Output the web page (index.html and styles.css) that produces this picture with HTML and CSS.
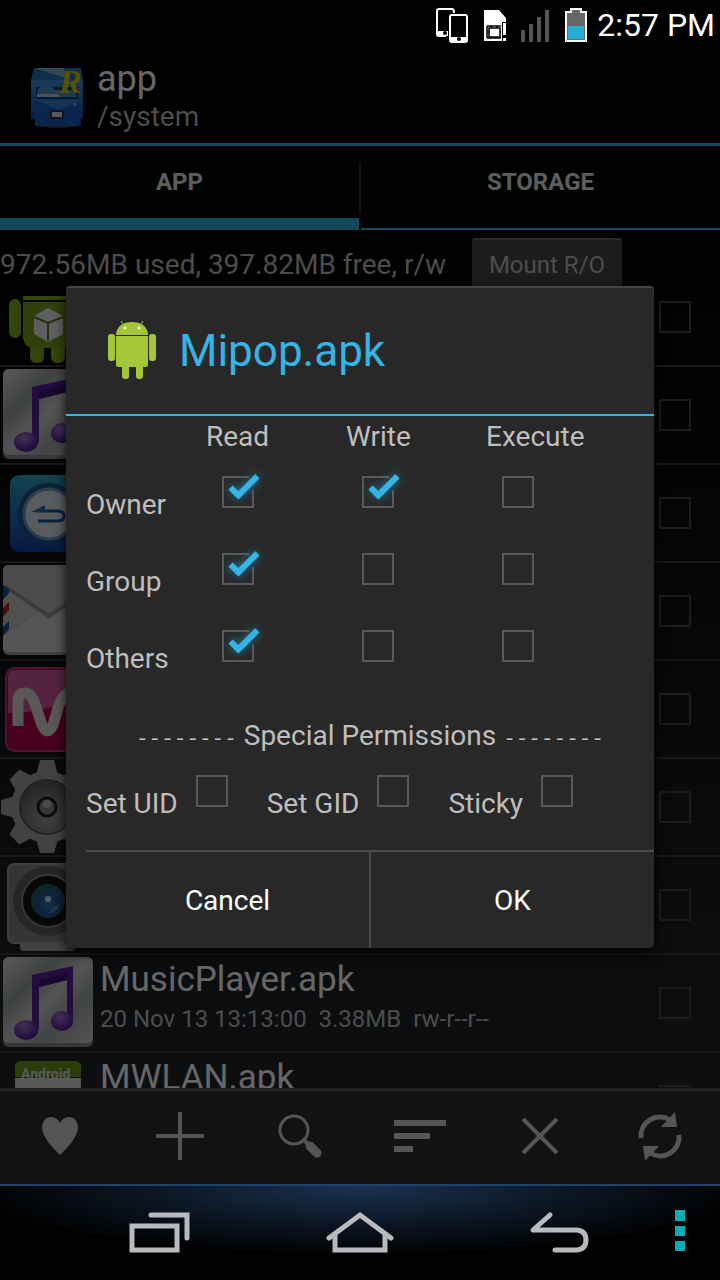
FILE: index.html
```html
<!DOCTYPE html>
<html lang="en">
<head>
    <meta charset="UTF-8">
    <meta name="viewport" content="width=device-width, initial-scale=1.0">
    <title>Mipop.apk permissions</title>
    <link rel="stylesheet" href="styles.css">
</head>
<body>
    <div class="status-bar">
        <svg width="34" height="36" viewBox="0 0 34 36">
            <path d="M17 2H4Q2 2 2 4V27Q2 29 4 29H11" fill="none" stroke="#fff" stroke-width="2"/>
            <path d="M17 2Q19 2 19 6" fill="none" stroke="#fff" stroke-width="2"/>
            <path d="M2 24H13V29H4Q2 29 2 27Z" fill="#fff"/>
            <circle cx="10" cy="26" r="2" fill="#000"/>
            <rect x="15" y="8" width="17" height="27" rx="2" fill="#000" stroke="#fff" stroke-width="2"/>
            <rect x="15" y="30" width="17" height="5" fill="#fff"/>
            <circle cx="24" cy="32" r="2" fill="#000"/>
        </svg>
        <svg width="24" height="34" viewBox="0 0 24 34">
            <path d="M1 2H16L23 10V14H19V33H1Z" fill="#fff"/>
            <path d="M20 15H23V27H20ZM20 30H23V33H20Z" fill="#fff"/>
            <path d="M4 18H18M4 30H18M4 18V30M8 18V30M14 18V30M4 24H18" stroke="#000" stroke-width="1.5" fill="none"/>
            <rect x="6" y="20" width="11" height="9" fill="#fff" stroke="#000" stroke-width="1.5"/>
        </svg>
        <svg width="29" height="34" viewBox="0 0 29 34" fill="#5a5555">
            <path d="M0 22H4V34H0ZM8 16H12V34H8ZM16 9H20V34H16ZM24 2H28V34H24Z"/>
        </svg>
        <svg width="24" height="36" viewBox="0 0 24 36">
            <path d="M6 1H18V4H23V35H1V4H6Z" fill="#fff"/>
            <path d="M8 3H16V6H21V33H3V6H8Z" fill="#666568"/>
            <rect x="4" y="19" width="16" height="13" fill="#27abd3"/>
        </svg>
        <span class="clock">2:57 PM</span>
    </div>

    <header class="action-bar">
        <svg class="app-icon" width="56" height="64" viewBox="0 0 56 64">
            <defs>
                <linearGradient id="cabinet" x1="0" y1="0" x2="0" y2="1">
                    <stop offset="0" stop-color="#49a4e2"/>
                    <stop offset="1" stop-color="#0d45b0"/>
                </linearGradient>
            </defs>
            <ellipse cx="29" cy="60" rx="20" ry="3" fill="#3b3b50"/>
            <path d="M5 3H52L54 16V54H52V61H6V54H2V16Z" fill="url(#cabinet)"/>
            <path d="M5 3H52L54 15H2Z" fill="#2476bd"/>
            <path d="M5 3H34L40 14Z" fill="#81b8d4"/>
            <path d="M6 35H50V61H6Z" fill="#1b5ec4"/>
            <path d="M6 35H50L30 45Z" fill="#3886d6"/>
            <path d="M7 22H49V34H7Z" fill="#124078"/>
            <path d="M9 24L14 21H22L26 25H45L48 32H8Z" fill="#4f94cf"/>
            <path d="M8 29H30V32H8Z" fill="#c3c7de"/>
            <rect x="22" y="46" width="12" height="7" rx="1" fill="#ddd" stroke="#342b55" stroke-width="2"/>
            <circle cx="46" cy="39" r="2" fill="#8a93b8"/>
            <text x="30" y="28" class="app-letter">R</text>
        </svg>
        <div>
            <h1 class="title">app</h1>
            <p class="path">/system</p>
        </div>
    </header>

    <nav class="tabs">
        <button class="tab active">APP</button>
        <button class="tab">STORAGE</button>
    </nav>

    <div class="volume">
        <span>972.56MB used, 397.82MB free, r/w</span>
        <button class="mount">Mount R/O</button>
    </div>

    <ul class="files">
        <li class="file">
            <svg width="96" height="96" viewBox="0 0 96 96">
                <g fill="#81ac1d">
                    <path d="M23 31V27Q25 4 48 4Q71 4 73 27V31Z"/>
                    <rect x="9" y="30" width="12" height="39" rx="6"/>
                    <rect x="75" y="30" width="12" height="39" rx="6"/>
                    <rect x="30" y="68" width="14" height="26" rx="6"/>
                    <rect x="51" y="68" width="14" height="26" rx="6"/>
                </g>
                <path d="M23 33H73V67Q73 79 61 79H35Q23 79 23 67Z" fill="#75a01c"/>
                <path d="M48 39L63 47V65L48 73L34 65V47Z" fill="#eee"/>
                <path d="M34 48L48 54L63 48M48 54V72" stroke="#577a16" stroke-width="2" fill="none"/>
            </svg>
            <input type="checkbox" class="check" aria-label="Select file 1">
        </li>
        <li class="file">
            <svg width="96" height="96" viewBox="0 0 96 96">
                <defs>
                    <linearGradient id="steel" x1="0" y1="0" x2="1" y2="1">
                        <stop offset="0" stop-color="#e0e0e0"/>
                        <stop offset="0.3" stop-color="#9ca3a5"/>
                        <stop offset="0.5" stop-color="#d0d0d0"/>
                        <stop offset="0.7" stop-color="#a2abac"/>
                        <stop offset="1" stop-color="#d8d0d4"/>
                    </linearGradient>
                    <radialGradient id="ball" cx="0.4" cy="0.3" r="0.7">
                        <stop offset="0" stop-color="#a679d0"/>
                        <stop offset="1" stop-color="#4a1693"/>
                    </radialGradient>
                    <g id="music">
                        <rect x="3" y="2" width="90" height="90" rx="6" fill="#8a8a8a"/>
                        <rect x="3" y="2" width="90" height="86" rx="6" fill="url(#steel)"/>
                        <path d="M32 20L73 11V66H67V25L39 32V75H32Z" fill="#5a20a0"/>
                        <path d="M39 25L67 18V25L39 32Z" fill="#3e1577"/>
                        <ellipse cx="26" cy="75" rx="12" ry="10" fill="url(#ball)"/>
                        <ellipse cx="62" cy="66" rx="11" ry="10" fill="url(#ball)"/>
                    </g>
                </defs>
                <use href="#music"/>
            </svg>
            <input type="checkbox" class="check" aria-label="Select file 2">
        </li>
        <li class="file">
            <svg width="96" height="96" viewBox="0 0 96 96">
                <defs>
                    <linearGradient id="sky" x1="0" y1="0" x2="0" y2="1">
                        <stop offset="0" stop-color="#32a5c4"/>
                        <stop offset="1" stop-color="#143fa4"/>
                    </linearGradient>
                </defs>
                <rect x="10" y="10" width="77" height="77" rx="9" fill="url(#sky)"/>
                <circle cx="49" cy="49" r="31" fill="#1b568f"/>
                <circle cx="49" cy="49" r="25" fill="#dde6ee" stroke="#6f9cc4" stroke-width="3"/>
                <path d="M36 46H58Q64 46 64 51Q64 56 58 56H38" fill="none" stroke="#20559c" stroke-width="3"/>
                <path d="M31 47L45 40V47Z" fill="#27729f"/>
            </svg>
            <input type="checkbox" class="check" aria-label="Select file 3">
        </li>
        <li class="file">
            <svg width="96" height="96" viewBox="0 0 96 96">
                <rect x="3" y="2" width="90" height="90" rx="6" fill="#a5a29e"/>
                <rect x="3" y="2" width="90" height="87" rx="6" fill="#cbc8c3"/>
                <path d="M3 70L40 44L50 52L60 44L93 70V83Q93 89 87 89H9Q3 89 3 83Z" fill="#d7d4cf"/>
                <path d="M3 72L40 46M93 72L60 46" stroke="#aaa7a2" stroke-width="1"/>
                <path d="M5 23L49 53L93 23" fill="none" stroke="#96938f" stroke-width="4"/>
                <path d="M3 20V8Q3 2 9 2H87Q93 2 93 8V20L53 48Q49 51 45 48Z" fill="#bfbcb8"/>
                <path d="M3 22L9 26V30L3 37Z" fill="#17519b"/>
                <path d="M3 45L9 39V47L3 54Z" fill="#ad2f25"/>
                <path d="M3 64L9 58V66L3 73Z" fill="#17519b"/>
            </svg>
            <input type="checkbox" class="check" aria-label="Select file 4">
        </li>
        <li class="file">
            <svg width="96" height="96" viewBox="0 0 96 96">
                <rect x="6" y="7" width="84" height="83" rx="9" fill="#b5004f" stroke="#ce3678" stroke-width="2"/>
                <path d="M8 52V16Q8 9 16 9H80Q88 9 88 16V30Q50 52 8 52Z" fill="#d3589c"/>
                <path d="M18 65V41Q18 32 25 32Q32 32 36 46L42 64Q47 76 53 64L59 44Q64 32 70 32Q78 32 78 44V65" fill="none" stroke="#e0dada" stroke-width="11"/>
            </svg>
            <input type="checkbox" class="check" aria-label="Select file 5">
        </li>
        <li class="file">
            <svg width="96" height="96" viewBox="0 0 96 96">
                <defs>
                    <radialGradient id="dish" cx="0.5" cy="0.7" r="0.6">
                        <stop offset="0" stop-color="#a2a2a2"/>
                        <stop offset="1" stop-color="#626262"/>
                    </radialGradient>
                </defs>
                <g fill="#a6a6a6">
                    <circle cx="47" cy="48" r="36"/>
                    <path id="teeth" d="M40 1H54L58 16V80L54 94H40L36 80V16Z"/>
                    <use href="#teeth" transform="rotate(45 47 48)"/>
                    <use href="#teeth" transform="rotate(90 47 48)"/>
                    <use href="#teeth" transform="rotate(135 47 48)"/>
                </g>
                <circle cx="47" cy="48" r="27" fill="url(#dish)" stroke="#555" stroke-width="2"/>
                <circle cx="47" cy="48" r="9" fill="#888" stroke="#1c1c1c" stroke-width="3"/>
                <circle cx="47" cy="45" r="4" fill="#bbb"/>
            </svg>
            <input type="checkbox" class="check" aria-label="Select file 6">
        </li>
        <li class="file">
            <svg width="96" height="96" viewBox="0 0 96 96">
                <defs>
                    <radialGradient id="lens" cx="0.5" cy="0.6" r="0.6">
                        <stop offset="0" stop-color="#2b82a8"/>
                        <stop offset="0.5" stop-color="#20539c"/>
                        <stop offset="1" stop-color="#19624f"/>
                    </radialGradient>
                </defs>
                <rect x="20" y="84" width="56" height="10" rx="4" fill="#a5a5a5"/>
                <rect x="8" y="7" width="80" height="79" rx="6" fill="#858585" stroke="#9d9d9d" stroke-width="2"/>
                <circle cx="48" cy="44" r="35" fill="#606060"/>
                <circle cx="48" cy="44" r="26" fill="#151515" stroke="#8a8a8a" stroke-width="2"/>
                <circle cx="48" cy="44" r="17" fill="url(#lens)"/>
                <circle cx="48" cy="42" r="3" fill="#d5e8e8"/>
                <path d="M48 57Q57 55 60 47L53 50Z" fill="#6085b5"/>
            </svg>
            <input type="checkbox" class="check" aria-label="Select file 7">
        </li>
        <li class="file">
            <svg width="96" height="96" viewBox="0 0 96 96"><use href="#music"/></svg>
            <div class="info">
                <label class="name" for="music-player">MusicPlayer.apk</label>
                <p class="meta">20 Nov 13 13:13:00&nbsp; 3.38MB&nbsp; rw-r--r--</p>
            </div>
            <input type="checkbox" class="check" id="music-player">
        </li>
        <li class="file">
            <svg width="96" height="96" viewBox="0 0 96 96">
                <path d="M15 24V11L19 8H77L81 11V24Z" fill="#699a1c"/>
                <text x="21" y="26" class="badge-text">Android</text>
                <rect x="15" y="25" width="66" height="60" fill="#ddd"/>
            </svg>
            <div class="info">
                <label class="name" for="mwlan">MWLAN.apk</label>
            </div>
            <input type="checkbox" class="check" id="mwlan">
        </li>
    </ul>

    <div class="toolbar">
        <button aria-label="Favorites">
            <svg width="56" height="56" viewBox="0 0 56 56">
                <path d="M28 47Q10 30 10 19Q11 9 19 9Q25 9 28 15Q31 9 37 9Q45 9 46 19Q46 30 28 47Z" fill="#d5d5d5"/>
            </svg>
        </button>
        <button aria-label="Add">
            <svg width="56" height="56" viewBox="0 0 56 56">
                <path d="M28 4V52M4 28H52" stroke="#d5d5d5" stroke-width="4"/>
            </svg>
        </button>
        <button aria-label="Search">
            <svg width="56" height="56" viewBox="0 0 56 56" stroke="#d5d5d5" fill="none">
                <circle cx="22" cy="22" r="14" stroke-width="3"/>
                <path d="M31 31L37 37" stroke-width="4"/>
                <path d="M38 38L45 45" stroke-width="9" stroke-linecap="round"/>
            </svg>
        </button>
        <button aria-label="Sort">
            <svg width="56" height="56" viewBox="0 0 56 56" fill="#d5d5d5">
                <path d="M2 12H54V18H2ZM2 25H38V31H2ZM2 38H21V44H2Z"/>
            </svg>
        </button>
        <button aria-label="Close">
            <svg width="56" height="56" viewBox="0 0 56 56">
                <path d="M11 11L45 45M45 11L11 45" stroke="#d5d5d5" stroke-width="4"/>
            </svg>
        </button>
        <button aria-label="Refresh">
            <svg width="56" height="56" viewBox="0 0 56 56">
                <path d="M9 30A19 19 0 0 1 38 12M47 27A19 19 0 0 1 18 45" fill="none" stroke="#d5d5d5" stroke-width="5"/>
                <path d="M43 4L45 19L29 19ZM13 53L11 38L27 38Z" fill="#d5d5d5"/>
            </svg>
        </button>
    </div>

    <div class="nav-bar">
        <button aria-label="Recent apps">
            <svg width="70" height="50" viewBox="0 0 70 50" fill="none" stroke="#b9babd" stroke-width="5">
                <rect x="7" y="20" width="45" height="24"/>
                <path d="M26 9H62V32" stroke-linecap="round"/>
            </svg>
        </button>
        <button aria-label="Home">
            <svg width="70" height="50" viewBox="0 0 70 50" fill="none" stroke="#b9babd" stroke-width="5">
                <path d="M4 32L35 9L66 32" stroke-linecap="round"/>
                <path d="M10 28V44H60V28"/>
            </svg>
        </button>
        <button aria-label="Back">
            <svg width="70" height="50" viewBox="0 0 70 50" fill="none" stroke="#b9babd" stroke-width="5" stroke-linecap="round" stroke-linejoin="round">
                <path d="M25 9L8 24H52Q61 25 61 34Q61 43 52 44H30"/>
            </svg>
        </button>
        <button aria-label="Menu">
            <svg width="10" height="42" viewBox="0 0 10 42" fill="#08adb8">
                <path d="M0 0H10V11H0ZM0 16H10V26H0ZM0 31H10V41H0Z"/>
            </svg>
        </button>
    </div>

    <div class="overlay">
        <form class="dialog" role="dialog" aria-labelledby="dialog-title">
            <div class="dialog-header">
                <svg width="48" height="64" viewBox="0 0 48 64" fill="#a4c639">
                    <path d="M13 2L17 8M35 2L31 8" stroke="#a4c639" stroke-width="1"/>
                    <path d="M8 15Q10 3 24 3Q38 3 40 15V16H8Z"/>
                    <path d="M8 17H40V46Q40 48 38 48H10Q8 48 8 46Z"/>
                    <rect x="0" y="15" width="7" height="27" rx="3"/>
                    <rect x="41" y="15" width="7" height="27" rx="3"/>
                    <rect x="14" y="40" width="7" height="20" rx="3"/>
                    <rect x="28" y="40" width="7" height="20" rx="3"/>
                    <circle cx="17" cy="9" r="1.3" fill="#fff"/>
                    <circle cx="31" cy="9" r="1.3" fill="#fff"/>
                </svg>
                <h2 class="dialog-title" id="dialog-title">Mipop.apk</h2>
            </div>

            <table class="permissions">
                <thead>
                    <tr><td></td><th>Read</th><th>Write</th><th>Execute</th></tr>
                </thead>
                <tbody>
                    <tr>
                        <th>Owner</th>
                        <td><input type="checkbox" class="check" aria-label="Owner read" checked></td>
                        <td><input type="checkbox" class="check" aria-label="Owner write" checked></td>
                        <td><input type="checkbox" class="check" aria-label="Owner execute"></td>
                    </tr>
                    <tr>
                        <th>Group</th>
                        <td><input type="checkbox" class="check" aria-label="Group read" checked></td>
                        <td><input type="checkbox" class="check" aria-label="Group write"></td>
                        <td><input type="checkbox" class="check" aria-label="Group execute"></td>
                    </tr>
                    <tr>
                        <th>Others</th>
                        <td><input type="checkbox" class="check" aria-label="Others read" checked></td>
                        <td><input type="checkbox" class="check" aria-label="Others write"></td>
                        <td><input type="checkbox" class="check" aria-label="Others execute"></td>
                    </tr>
                </tbody>
            </table>

            <p class="special-title"><span class="dashes">--------</span> Special Permissions <span class="dashes">--------</span></p>
            <div class="special">
                <div class="option">
                    <label for="set-uid">Set UID</label>
                    <input type="checkbox" class="check" id="set-uid">
                </div>
                <div class="option">
                    <label for="set-gid">Set GID</label>
                    <input type="checkbox" class="check" id="set-gid">
                </div>
                <div class="option">
                    <label for="sticky">Sticky</label>
                    <input type="checkbox" class="check" id="sticky">
                </div>
            </div>

            <div class="buttons">
                <button type="button">Cancel</button>
                <button type="button">OK</button>
            </div>
        </form>
    </div>
</body>
</html>
```
FILE: styles.css
```css
*,
*::before,
*::after {
    box-sizing: border-box;
}

body {
    margin: 0;
    height: 100vh;
    display: flex;
    flex-direction: column;
    overflow: hidden;
    font-family: Roboto, sans-serif;
    font-size: 28px;
    color: #bebebe;
    background: linear-gradient(#000 15%, #272d33);
}

h1, h2, p, ul {
    margin: 0;
    padding: 0;
    font-weight: normal;
}

button {
    font-family: inherit;
    color: inherit;
    border: none;
    padding: 0;
    background: none;
    cursor: pointer;
}

svg {
    display: block;
    flex: none;
}

/* status bar */
.status-bar {
    height: 50px;
    flex: none;
    display: flex;
    align-items: center;
    justify-content: flex-end;
    gap: 14px;
    padding-right: 5px;
    background: #000;
}

.clock {
    font-size: 32px;
    color: #fff;
    margin-left: -5px;
}

/* header */
.action-bar {
    height: 96px;
    flex: none;
    display: flex;
    align-items: center;
    gap: 12px;
    padding-left: 29px;
    border-bottom: 3px solid #33b5e5;
    background: #000;
}

.app-icon {
    overflow: visible;
}

.app-letter {
    font-family: "Liberation Serif", serif;
    font-size: 34px;
    font-style: italic;
    font-weight: bold;
    fill: #d9c900;
}

.title {
    font-size: 36px;
    line-height: 40px;
    color: #fff;
}

.path {
    line-height: 36px;
}

.tabs {
    height: 84px;
    flex: none;
    display: flex;
    gap: 2px;
    background: #020303;
}

.tab {
    flex: 1;
    position: relative;
    font-size: 24px;
    font-weight: bold;
    color: #e8e8e8;
    padding-bottom: 10px;
    border-bottom: 2px solid #33b5e5;
}

.tab.active {
    padding-bottom: 0;
    border-bottom-width: 12px;
}

.tab + .tab::before {
    content: "";
    position: absolute;
    top: 16px;
    left: -2px;
    width: 2px;
    height: 52px;
    background: #333;
}

.volume {
    height: 66px;
    flex: none;
    display: flex;
    align-items: flex-start;
    gap: 26px;
    padding-top: 8px;
    line-height: 54px;
    white-space: nowrap;
}

.mount {
    width: 150px;
    height: 52px;
    font-size: 24px;
    border-top: 2px solid #666;
    border-radius: 3px;
    background: #464849;
}

/* file list */
.files {
    flex: 1;
    min-height: 0;
    overflow: hidden;
    list-style: none;
}

.file {
    height: 98px;
    display: flex;
    align-items: center;
    padding-right: 29px;
    border-bottom: 2px solid #3b3e42;
}

/* list is scrolled down a little */
.file:first-child {
    margin-top: -27px;
}

.info {
    align-self: flex-start;
    padding: 4px 0 0 4px;
}

.name {
    display: block;
    font-size: 35px;
    line-height: 42px;
    color: #fff;
}

.meta {
    font-size: 24px;
    line-height: 36px;
}

.badge-text {
    font-size: 14px;
    font-weight: bold;
    fill: #ddd;
}

.check {
    appearance: none;
    flex: none;
    position: relative;
    width: 32px;
    height: 32px;
    margin: 0;
    border: 2px solid #585858;
}

.file .check {
    margin-left: auto;
    border-color: #484848;
}

.check:checked::before {
    content: "";
    position: absolute;
    top: -2px;
    right: -2px;
    width: 5px;
    height: 14px;
    background: #282828;
}

.check:checked::after {
    content: "";
    position: absolute;
    left: 5px;
    top: -1px;
    width: 30px;
    height: 14px;
    border-left: 6px solid #33b5e5;
    border-bottom: 6px solid #33b5e5;
    transform: rotate(-45deg);
    filter: drop-shadow(0 0 5px #1d7ea3);
}

/* toolbar */
.toolbar {
    height: 96px;
    flex: none;
    display: flex;
    border-top: 3px solid #5c5e60;
    background: #2a2f33;
}

.toolbar button {
    flex: 1;
    display: flex;
    align-items: center;
    justify-content: center;
    padding-bottom: 4px;
}

.nav-bar {
    height: 96px;
    flex: none;
    display: grid;
    grid-template-columns: 1fr 1fr 1fr 40px;
    padding: 0 20px 0 60px;
    border-top: 2px solid #1d436f;
    background: radial-gradient(ellipse 55% 75% at 50% 0, #1b3252, #0c1826 50%, #000);
}

.nav-bar button {
    display: flex;
    align-items: center;
    justify-content: center;
    padding-bottom: 4px;
}

/* dialog */
.overlay {
    position: absolute;
    top: 50px;
    right: 0;
    bottom: 96px;
    left: 0;
    display: flex;
    align-items: center;
    padding: 0 66px;
    background: rgba(0, 0, 0, 0.6);
}

.dialog {
    flex: 1;
    border-top: 2px solid #444;
    border-radius: 4px;
    background: #282828;
    box-shadow: 0 4px 12px rgba(0, 0, 0, 0.8);
}

.dialog-header {
    height: 128px;
    display: flex;
    align-items: center;
    gap: 23px;
    padding-left: 42px;
    border-bottom: 2px solid #33b5e5;
}

.dialog-title {
    font-size: 44px;
    color: #33b5e5;
}

.permissions {
    margin-left: 20px;
    border-collapse: collapse;
    table-layout: fixed;
    width: 540px;
}

.permissions th,
.permissions td {
    padding: 0;
    font-weight: normal;
    text-align: left;
    vertical-align: top;
}

.permissions thead tr {
    height: 44px;
    line-height: 42px;
}

.permissions td:first-child {
    width: 120px;
}

.permissions tbody tr {
    height: 77px;
}

.permissions tbody th {
    line-height: 36px;
    padding-top: 27px;
}

.permissions tbody td {
    padding: 16px 0 0 16px;
}

.permissions .check {
    display: block;
}

.special-title {
    line-height: 36px;
    padding: 27px 0 0 20px;
    text-align: center;
}

.dashes {
    font-family: "Liberation Mono", monospace;
    font-size: 21px;
    line-height: 20px;
}

.special {
    display: flex;
    gap: 39px;
    height: 96px;
    padding: 21px 0 0 20px;
}

.option {
    display: flex;
    gap: 18px;
}

.option label {
    line-height: 36px;
    padding-top: 11px;
}

.buttons {
    display: flex;
    height: 98px;
    margin-left: 20px;
    border-top: 2px solid #4a4a4a;
}

.buttons button {
    flex: 1;
    font-size: 28px;
    color: #fff;
}

.buttons button + button {
    border-left: 2px solid #4a4a4a;
}
```
